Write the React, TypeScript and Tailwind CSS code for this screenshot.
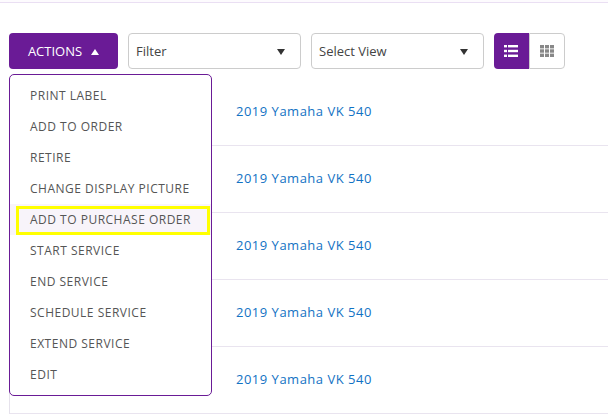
import React from "react";

const menuItems = [
  "PRINT LABEL",
  "ADD TO ORDER",
  "RETIRE",
  "CHANGE DISPLAY PICTURE",
  "ADD TO PURCHASE ORDER",
  "START SERVICE",
  "END SERVICE",
  "SCHEDULE SERVICE",
  "EXTEND SERVICE",
  "EDIT",
];

function Caret() {
  return <span className="w-0 h-0 border-l-[4.5px] border-r-[4.5px] border-t-[6px] border-l-transparent border-r-transparent border-t-[#333]" />;
}

function SelectBox({ label }: { label: string }) {
  return (
    <div className="w-[173px] h-9 pl-[7px] pr-[15px] pt-px flex items-center justify-between bg-white border border-[#ccc] rounded text-[13px] text-[#444]">
      <span>{label}</span>
      <Caret />
    </div>
  );
}

export default function App() {
  return (
    <div className="relative w-[608px] h-[415px] overflow-hidden bg-white font-['Open_Sans',sans-serif]">
      {/* TOP STRIP */}
      <div className="h-[3px] bg-[#fdfbfe] border-b border-[#eadff3]" />

      {/* TOOLBAR */}
      <div className="flex items-center pl-[9px] pt-[30px] gap-[10px]">
        <button className="w-[109px] h-9 pt-px flex items-center justify-center gap-[9px] bg-[#6a1b96] rounded text-white text-[13px]">
          ACTIONS
          <span className="w-0 h-0 border-l-[4.5px] border-r-[4.5px] border-b-[6px] border-l-transparent border-r-transparent border-b-white" />
        </button>
        <SelectBox label="Filter" />
        <SelectBox label="Select View" />
        <div className="flex h-9 w-[71px]">
          <div className="w-[35px] pr-[2px] flex items-center justify-center bg-[#6a1b96] rounded-l">
            <svg width="14" height="12" viewBox="0 0 14 12" fill="#fff">
              <rect x="0" y="0" width="3" height="2.4" />
              <rect x="4" y="0" width="10" height="2.4" />
              <rect x="0" y="4.8" width="3" height="2.4" />
              <rect x="4" y="4.8" width="10" height="2.4" />
              <rect x="0" y="9.6" width="3" height="2.4" />
              <rect x="4" y="9.6" width="10" height="2.4" />
            </svg>
          </div>
          <div className="w-[36px] flex items-center justify-center border border-[#ccc] rounded-r">
            <svg width="14" height="12" viewBox="0 0 14 12" fill="#888">
              <rect x="0" y="0" width="4" height="3.4" />
              <rect x="5" y="0" width="4" height="3.4" />
              <rect x="10" y="0" width="4" height="3.4" />
              <rect x="0" y="4.3" width="4" height="3.4" />
              <rect x="5" y="4.3" width="4" height="3.4" />
              <rect x="10" y="4.3" width="4" height="3.4" />
              <rect x="0" y="8.6" width="4" height="3.4" />
              <rect x="5" y="8.6" width="4" height="3.4" />
              <rect x="10" y="8.6" width="4" height="3.4" />
            </svg>
          </div>
        </div>
      </div>

      {/* TABLE ROWS */}
      <div className="ml-[9px] mt-[10px] border-l border-[#e6e2ec]">
        {[0, 1, 2, 3, 4].map((i) => (
          <div key={i} className="h-[67px] pl-[226px] pt-[23px] border-b border-[#e9e4ef] text-[13px] tracking-[0.5px] leading-[18px] text-[#1272c4]">
            2019 Yamaha VK 540
          </div>
        ))}
      </div>

      {/* DROPDOWN */}
      <div className="absolute left-[9px] top-[74px] w-[203px] h-[322px] pt-[5px] bg-white border border-[#6a1b96] rounded-[5px]">
        {menuItems.map((item) => {
          const active = item === "ADD TO PURCHASE ORDER";
          return (
            <div key={item} className={"h-[31px] flex items-center pl-[20px] text-[12px] tracking-[0.5px] text-[#555] " + (active ? "relative bg-[#f8f4fa]" : "")}>
              {item}
              {active && <div className="absolute left-[6px] top-[2px] w-[194px] h-[29px] border-[3px] border-[#ffff00]" />}
            </div>
          );
        })}
      </div>
    </div>
  );
}
